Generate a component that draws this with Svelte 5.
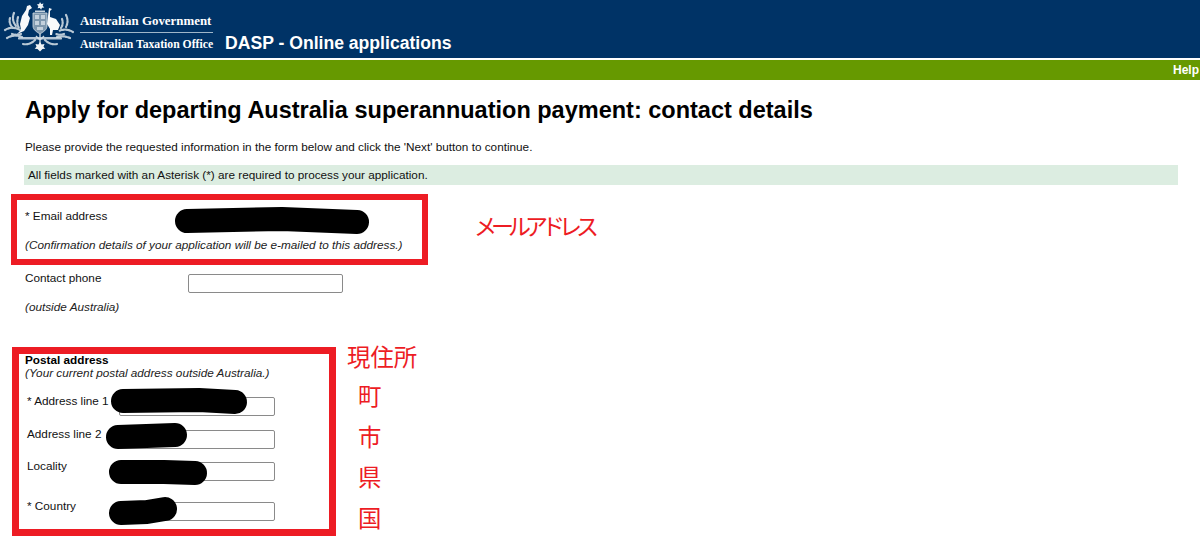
<script lang="ts">
	const postalRows = [
		{ label: '* Address line 1', height: 33 },
		{ label: 'Address line 2', height: 32 },
		{ label: 'Locality', height: 40 },
		{ label: '* Country', height: 26 }
	];
	const addressNotes = ['町', '市', '県', '国'];
</script>

<header class="banner">
	<svg class="crest" viewBox="0 0 76 56" aria-hidden="true">
		<!-- wattle sprays -->
		<g fill="none" stroke="#b9c9d6" stroke-width="2.2" stroke-dasharray="1.8 1.2" stroke-linecap="round">
			<path d="M14 13c-2 5-1 9 2 13" />
			<path d="M10 18c-1 4 0 7 3 10" />
			<path d="M18 17c-1 4-1 8 1 11" />
			<path d="M5 30c5-3 10-3 15 0" />
			<path d="M7 38c5-3 10-3 15-1" />
			<path d="M12 34c3 1 6 1 9 0" />
			<path d="M66 15c2 4 2 8 0 12" />
			<path d="M62 19c1 3 1 6-1 9" />
			<path d="M73 32c-5-3-10-3-14-1" />
			<path d="M70 38c-5-2-9-2-13-1" />
			<path d="M64 34c-3 1-5 1-8 0" />
			<path d="M23 44c5 1 9-1 12-4" />
			<path d="M57 44c-5 1-9-1-12-4" />
		</g>
		<!-- shield and tree -->
		<path d="M33 13h14v13c0 4-4 6-7 8-3-2-7-4-7-8z" fill="#7f98ae" stroke="#d5dfe7" stroke-width="0.8" />
		<path d="M35 15h4v4h-4zM41 15h4v4h-4zM35 21h4v4h-4zM41 21h4v4h-4zM37 27h6v3h-6z" fill="#dbe4ec" opacity="0.75" />
		<path d="M40 34v10M36 36l4 4 4-4" fill="none" stroke="#c6d4df" stroke-width="1.4" />
		<rect x="18" y="37" width="44" height="2.6" rx="1.2" fill="#d5dfe7" opacity="0.85" />
		<!-- crest star -->
		<path d="M40 2l1.2 2 2.3-.5-.8 2.2 1.6 1.7-2.3.3-.9 2.1-1.2-1.9-2.3.3.8-2.2-1.6-1.6 2.3-.4z" fill="#eef3f6" />
		<rect x="35" y="10.5" width="10" height="1.6" fill="#c6d4df" />
		<!-- kangaroo -->
		<path d="M30 5l2 3-3 2-1 5 2 3-2 7-4 6-7 3 4-4-1-6 2-8 4-6 1-4z" fill="#f7f9fb" />
		<!-- emu -->
		<path d="M49 8l3 1-2 2v6l6 2 4 6-2 5-5 0-1 5h-2v-6l-3-5 1-8z" fill="#f7f9fb" />
		<!-- commonwealth star below -->
		<path d="M40 42l1.6 2.6 2.9-.6-1 2.8 1.8 2-2.8.3-2.5 2.4-2.5-2.4-2.8-.3 1.8-2-1-2.8 2.9.6z" fill="#eef3f6" />
	</svg>
	<div class="agency">
		<span class="gov">Australian Government</span>
		<span class="office">Australian Taxation Office</span>
	</div>
	<div class="app-name">DASP - Online applications</div>
</header>

<nav class="strip"><a href="#help">Help</a></nav>

<main>
	<h1>Apply for departing Australia superannuation payment: contact details</h1>
	<p class="intro">Please provide the requested information in the form below and click the 'Next' button to continue.</p>
	<p class="required">All fields marked with an Asterisk (*) are required to process your application.</p>

	<section class="email-row">
		<div class="marked email-box">
			<div class="email-label">* Email address</div>
			<div class="hint">(Confirmation details of your application will be e-mailed to this address.)</div>
			<svg class="redact" width="400" height="60" aria-hidden="true">
				<path d="M170 21L265 19L340 22" />
			</svg>
		</div>
		<div class="note email-note">メールアドレス</div>
	</section>

	<section class="phone">
		<div class="phone-line">
			<label for="phone">Contact phone</label>
			<input id="phone" type="text" />
		</div>
		<div class="hint">(outside Australia)</div>
	</section>

	<section class="postal-row">
		<div class="marked postal-box">
			<h2>Postal address</h2>
			<div class="hint postal-hint">(Your current postal address outside Australia.)</div>
			{#each postalRows as row}
				<div class="postal-line" style="height: {row.height}px">
					<span>{row.label}</span>
					<input type="text" aria-label={row.label} />
				</div>
			{/each}
			<svg class="redact" width="300" height="180" aria-hidden="true">
				<path d="M104 47L180 46L216 48" />
				<path d="M99 83L156 81" />
				<path d="M102 118L145 118L176 119" />
				<path d="M102 159L128 158L146 155" />
			</svg>
		</div>
		<div class="notes">
			<div class="note">現住所</div>
			{#each addressNotes as note}
				<div class="note indented">{note}</div>
			{/each}
		</div>
	</section>
</main>

<style>
	:global(body) {
		margin: 0;
		background: #fff;
		color: #111;
		font-family: 'Liberation Sans', Arial, sans-serif;
		font-size: 11.75px;
	}

	.banner {
		display: flex;
		align-items: flex-start;
		height: 58px;
		background: #003366;
		color: #fff;
		overflow: hidden;
	}

	.crest {
		width: 76px;
		height: 56px;
		flex: none;
	}

	.agency {
		display: flex;
		flex-direction: column;
		width: 133px;
		margin: 14px 0 0 4px;
		font-family: 'Liberation Serif', 'Times New Roman', serif;
		font-weight: bold;
	}

	.gov {
		font-size: 12.9px;
		line-height: 15px;
		padding-bottom: 3px;
		border-bottom: 1px solid #9fb6c9;
	}

	.office {
		font-size: 11.7px;
		line-height: 14px;
		margin-top: 5px;
		white-space: nowrap;
	}

	.app-name {
		margin: 33px 0 0 12px;
		font-size: 17.6px;
		line-height: 20px;
		font-weight: bold;
	}

	.strip {
		display: flex;
		justify-content: flex-end;
		align-items: center;
		height: 20px;
		margin-top: 2px;
		background: #669900;
	}

	.strip a {
		color: #fff;
		text-decoration: none;
		font-size: 12px;
		font-weight: bold;
		margin-right: 1px;
	}

	main {
		padding-left: 11px;
	}

	h1 {
		margin: 17px 0 0 14px;
		font-size: 23.5px;
		line-height: 26px;
		font-weight: bold;
		color: #000;
	}

	.intro {
		margin: 17px 0 0 14px;
		line-height: 14px;
	}

	.required {
		width: 1150px;
		margin: 11px 0 0 13px;
		padding-left: 4px;
		height: 20px;
		line-height: 19px;
		background: #dcede1;
	}

	.email-row {
		display: flex;
		margin-top: 9px;
	}

	.marked {
		position: relative;
		box-sizing: border-box;
		border: 6px solid #ed1c24;
		background: #fff;
	}

	.email-box {
		width: 417px;
		height: 71px;
		padding: 9px 0 0 8px;
	}

	.email-label {
		line-height: 14px;
	}

	.hint {
		font-style: italic;
		line-height: 14px;
		color: #222;
	}

	.email-box .hint {
		margin-top: 15px;
	}

	/* the black marker scribbles sit over the fields */
	.redact {
		position: absolute;
		left: 0;
		top: 0;
		pointer-events: none;
	}

	.redact path {
		fill: none;
		stroke: #000;
		stroke-width: 24;
		stroke-linecap: round;
		stroke-linejoin: round;
	}

	.note {
		color: #ed1c24;
		font-family: 'Noto Sans CJK JP', sans-serif;
		font-size: 23.4px;
		line-height: 40.5px;
	}

	.email-note {
		margin: 11px 0 0 46px;
		font-size: 23px;
		letter-spacing: -6px;
	}

	.phone {
		padding: 6px 0 0 14px;
		height: 77px;
		box-sizing: border-box;
	}

	.phone-line {
		display: flex;
		align-items: flex-start;
		height: 29px;
	}

	.phone-line label {
		width: 163px;
		line-height: 14px;
	}

	input {
		box-sizing: border-box;
		width: 155px;
		height: 19px;
		margin: 3px 0 0;
		padding: 0;
		border: 1px solid #8a8a8a;
		border-radius: 2px;
		background: #fff;
	}

	.postal-row {
		display: flex;
		margin-top: 5px;
	}

	.postal-box {
		width: 324px;
		height: 189px;
		margin-left: 1px;
		padding: 0 0 0 6px;
		border-width: 7px;
	}

	h2 {
		margin: 0;
		font-size: 11.75px;
		line-height: 12px;
		font-weight: bold;
		color: #000;
	}

	.postal-hint {
		margin-bottom: 14px;
	}

	.postal-line {
		display: flex;
		align-items: flex-start;
		padding-left: 2px;
	}

	.postal-line span {
		width: 92px;
		flex: none;
		line-height: 14px;
	}

	.postal-line input {
		width: 156px;
	}

	.notes {
		margin: -10px 0 0 11px;
	}

	.notes .note:first-child {
		line-height: 38px;
	}

	.indented {
		padding-left: 11px;
	}
</style>
